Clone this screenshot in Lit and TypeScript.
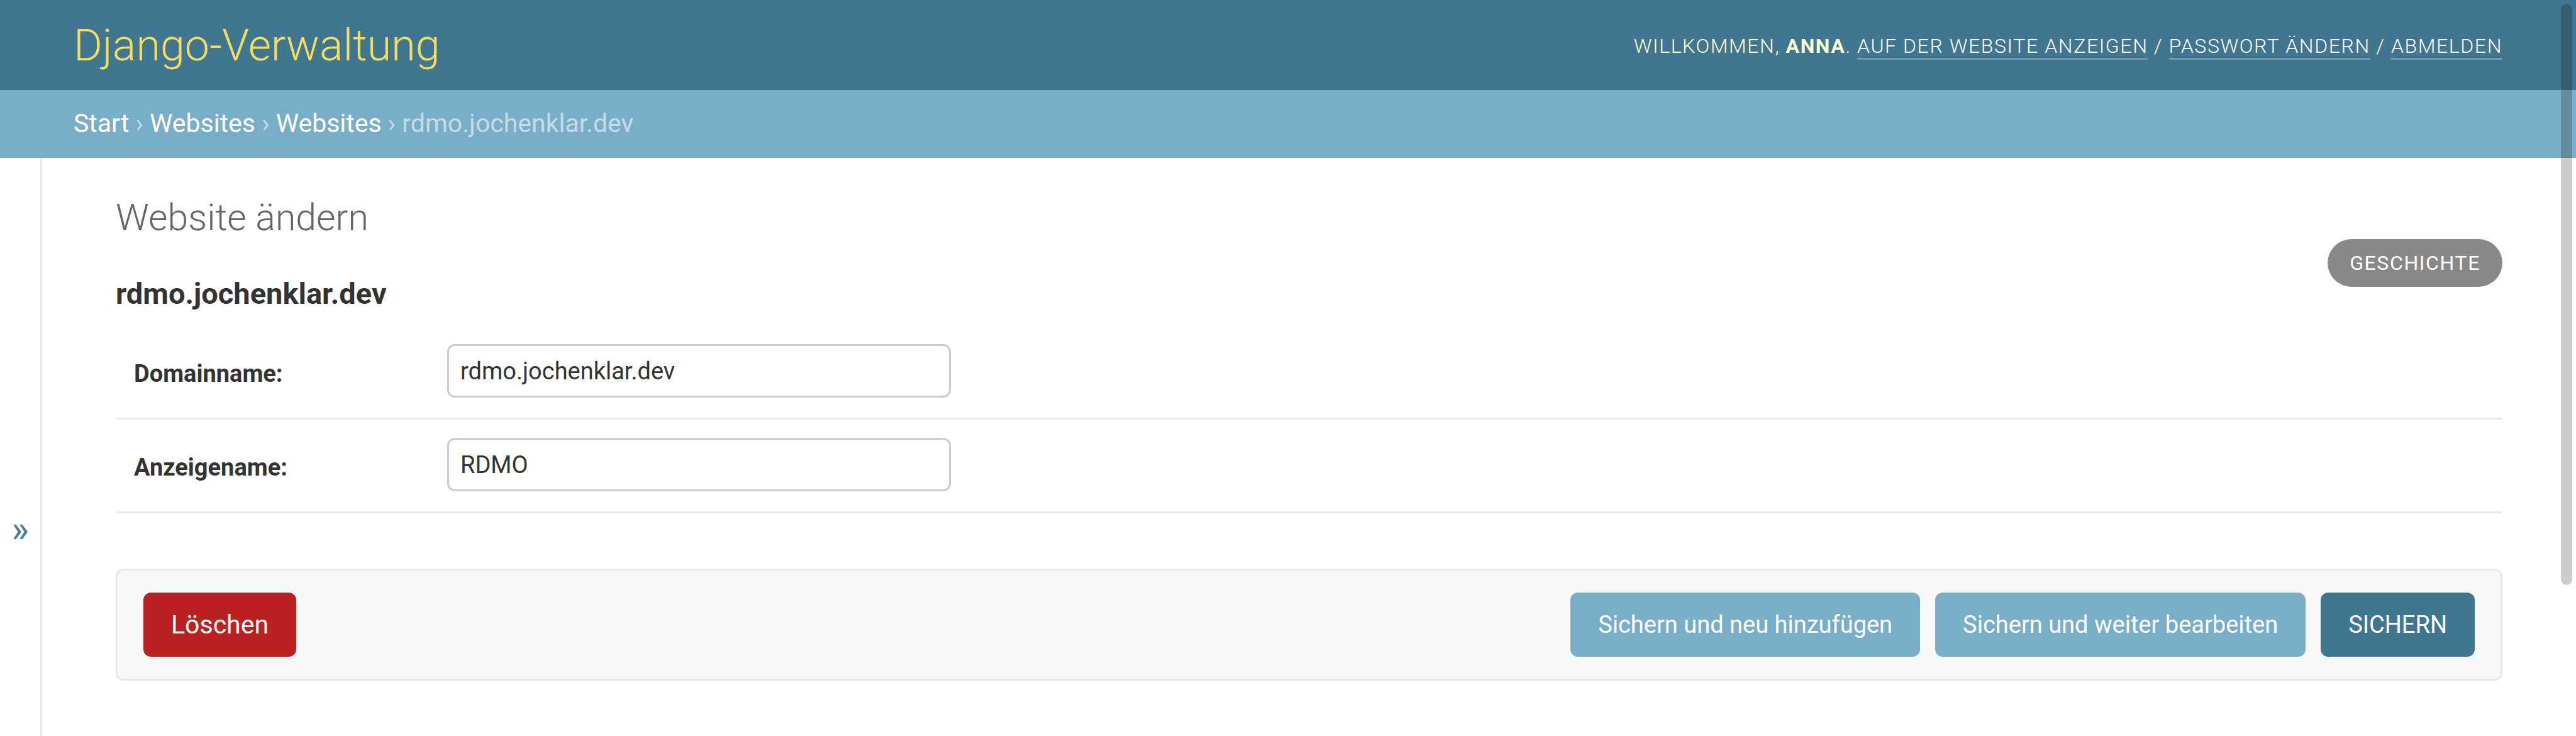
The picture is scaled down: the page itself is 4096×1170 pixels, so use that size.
import { LitElement, html, css } from "lit";
import { customElement, state } from "lit/decorators.js";

interface Crumb {
  label: string;
  href: string;
}

@customElement("admin-header")
class AdminHeader extends LitElement {
  static styles = css`
    :host {
      display: block;
      background: #417690;
      color: #ffc;
    }
    .bar {
      display: flex;
      align-items: center;
      justify-content: space-between;
      padding: 30px 117px 28px;
    }
    .brand {
      margin: 0;
      font-size: 70px;
      line-height: 85px;
      font-weight: 300;
    }
    .brand a {
      color: #f5dd5d;
      text-decoration: none;
    }
    .tools {
      font-size: 32px;
      line-height: 38px;
      font-weight: 300;
      letter-spacing: 0.05em;
      text-transform: uppercase;
    }
    .tools strong {
      font-weight: 700;
    }
    .tools a {
      color: #fff;
      text-decoration: none;
      border-bottom: 3px solid rgba(255, 255, 255, 0.25);
    }
  `;

  render() {
    return html`
      <header class="bar">
        <h1 class="brand"><a href="#start">Django-Verwaltung</a></h1>
        <div class="tools">
          Willkommen, <strong>Anna</strong>.
          <a href="#site">Auf der Website anzeigen</a> /
          <a href="#password">Passwort ändern</a> /
          <a href="#logout">Abmelden</a>
        </div>
      </header>
    `;
  }
}

@customElement("admin-breadcrumbs")
class AdminBreadcrumbs extends LitElement {
  static styles = css`
    :host {
      display: block;
      background: #79aec8;
      color: #c4dce8;
    }
    .crumbs {
      padding: 28px 117px 30px;
      font-size: 41px;
      line-height: 50px;
    }
    .crumbs a {
      color: #fff;
      text-decoration: none;
    }
  `;

  private crumbs: Crumb[] = [
    { label: "Start", href: "#start" },
    { label: "Websites", href: "#app" },
    { label: "Websites", href: "#list" },
  ];

  render() {
    return html`
      <nav class="crumbs" aria-label="Brotkrumen">
        ${this.crumbs.map((c) => html`<a href=${c.href}>${c.label}</a> › `)}rdmo.jochenklar.dev
      </nav>
    `;
  }
}

@customElement("site-form")
class SiteForm extends LitElement {
  static styles = css`
    :host {
      display: block;
      flex: 1;
      min-width: 0;
      padding: 58px 117px;
      color: #333;
    }
    .heading {
      display: flex;
      align-items: flex-start;
      justify-content: space-between;
      margin-bottom: 24px;
    }
    .title {
      margin: 0 0 56px;
      font-size: 59px;
      line-height: 74px;
      font-weight: 300;
      color: #666;
    }
    .object {
      margin: 0;
      font-size: 47px;
      line-height: 55px;
      font-weight: 700;
    }
    .history {
      margin-top: 71px;
      padding: 19px 35px;
      border-radius: 44px;
      background: #888;
      color: #fff;
      font-size: 32px;
      line-height: 38px;
      letter-spacing: 0.05em;
      text-transform: uppercase;
      text-decoration: none;
    }
    .row {
      display: flex;
      align-items: flex-start;
      padding: 29px 29px 32px;
      border-bottom: 3px solid #e8e8e8;
    }
    .label {
      flex: none;
      width: 498px;
      padding-top: 22px;
      font-size: 38px;
      line-height: 50px;
      font-weight: 700;
    }
    .field {
      box-sizing: border-box;
      width: 801px;
      height: 85px;
      margin: 0;
      padding: 15px 18px;
      border: 3px solid #ccc;
      border-radius: 12px;
      background: #fff;
      color: #333;
      font-family: inherit;
      font-size: 38px;
    }
    .submit {
      display: flex;
      align-items: center;
      gap: 24px;
      margin-top: 88px;
      padding: 35px 41px;
      border: 3px solid #e8e8e8;
      border-radius: 12px;
      background: #f8f8f8;
    }
    .button {
      margin: 0;
      padding: 29px 44px;
      border: none;
      border-radius: 12px;
      background: #79aec8;
      color: #fff;
      font-family: inherit;
      font-size: 38px;
      line-height: 44px;
      font-weight: 400;
      text-decoration: none;
      cursor: pointer;
    }
    .delete {
      margin-right: auto;
      background: #ba2121;
      font-size: 41px;
    }
    .primary {
      background: #417690;
      text-transform: uppercase;
    }
  `;

  @state() private domain = "rdmo.jochenklar.dev";
  @state() private name = "RDMO";

  render() {
    return html`
      <div class="heading">
        <div>
          <h1 class="title">Website ändern</h1>
          <h2 class="object">rdmo.jochenklar.dev</h2>
        </div>
        <a class="history" href="#history">Geschichte</a>
      </div>
      <form @submit=${(e: Event) => e.preventDefault()}>
        <div class="row">
          <label class="label" for="domain">Domainname:</label>
          <input
            class="field"
            id="domain"
            type="text"
            .value=${this.domain}
            @input=${(e: Event) => (this.domain = (e.target as HTMLInputElement).value)}
          />
        </div>
        <div class="row">
          <label class="label" for="name">Anzeigename:</label>
          <input
            class="field"
            id="name"
            type="text"
            .value=${this.name}
            @input=${(e: Event) => (this.name = (e.target as HTMLInputElement).value)}
          />
        </div>
        <div class="submit">
          <a class="button delete" href="#delete">Löschen</a>
          <button class="button" type="submit">Sichern und neu hinzufügen</button>
          <button class="button" type="submit">Sichern und weiter bearbeiten</button>
          <button class="button primary" type="submit">Sichern</button>
        </div>
      </form>
    `;
  }
}

@customElement("app-root")
class AppRoot extends LitElement {
  static styles = css`
    :host {
      display: flex;
      flex-direction: column;
      position: relative;
      height: 100vh;
      overflow: hidden;
      background: #fff;
      font-family: Roboto, "Liberation Sans", sans-serif;
    }
    .main {
      display: flex;
      align-items: flex-start;
    }
    .toggle {
      flex: none;
      box-sizing: border-box;
      width: 67px;
      height: 100vh;
      padding: 8px 0 0;
      border: none;
      border-right: 3px solid #e8e8e8;
      background: #fff;
      color: #447e9b;
      font-family: inherit;
      font-size: 59px;
      cursor: pointer;
    }
    .thumb {
      position: absolute;
      top: 6px;
      right: 6px;
      width: 18px;
      height: 79vh;
      border-radius: 9px;
      background: rgba(0, 0, 0, 0.2);
    }
  `;

  render() {
    return html`
      <admin-header></admin-header>
      <admin-breadcrumbs></admin-breadcrumbs>
      <div class="main">
        <button class="toggle" type="button" aria-label="Navigation umschalten">»</button>
        <site-form></site-form>
      </div>
      <div class="thumb"></div>
    `;
  }
}
